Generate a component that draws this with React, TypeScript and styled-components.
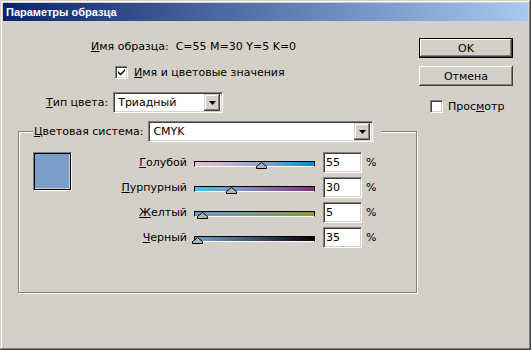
import React from "react";
import styled, { createGlobalStyle } from "styled-components";

const Global = createGlobalStyle`
  html, body { margin: 0; padding: 0; background: #d4d0c8; }
  body { font-family: "DejaVu Sans", Verdana, sans-serif; font-size: 11px; color: #000; }
  * { box-sizing: border-box; }
`;

const Window = styled.div`
  width: 531px;
  height: 350px;
  background: #d4d0c8;
  padding: 3px;
  display: flex;
  flex-direction: column;
  box-shadow: inset -1px -1px 0 #404040, inset 1px 1px 0 #d4d0c8,
    inset -2px -2px 0 #808080, inset 2px 2px 0 #ffffff;
`;

const TitleBar = styled.div`
  height: 18px;
  display: flex;
  align-items: center;
  padding-left: 3px;
  background: linear-gradient(to right, #0a246a, #a6caf0);
  color: #fff;
  font-family: "Liberation Sans", Arial, sans-serif;
  font-weight: bold;
  font-size: 11px;
`;

const Body = styled.div`
  display: flex;
`;

const Main = styled.div`
  display: flex;
  flex-direction: column;
  padding-left: 15px;
  width: 415px;
`;

const Side = styled.div`
  display: flex;
  flex-direction: column;
  padding-top: 17px;
`;

const Row = styled.div<{ $top: number; $left: number; $h?: number; $gap?: number }>`
  display: flex;
  align-items: center;
  margin-top: ${(p) => p.$top}px;
  padding-left: ${(p) => p.$left}px;
  height: ${(p) => p.$h ?? 16}px;
  gap: ${(p) => p.$gap ?? 6}px;
  white-space: nowrap;
`;

const Label = styled.span``;

const CheckBox = styled.span`
  width: 13px;
  height: 13px;
  background: #fff;
  border: 1px solid;
  border-color: #808080 #fff #fff #808080;
  box-shadow: inset 1px 1px 0 #404040, inset -1px -1px 0 #d4d0c8;
  display: inline-flex;
  align-items: center;
  justify-content: center;
  flex: none;
`;

const SelectBox = styled.div<{ $w: number }>`
  width: ${(p) => p.$w}px;
  height: 21px;
  background: #fff;
  border: 1px solid;
  border-color: #808080 #fff #fff #808080;
  box-shadow: inset 1px 1px 0 #404040, inset -1px -1px 0 #d4d0c8;
  display: flex;
  align-items: center;
  padding: 2px;
  flex: none;
`;

const SelectText = styled.span`
  flex: 1;
  padding-left: 2px;
`;

const DropButton = styled.span`
  width: 16px;
  height: 17px;
  background: #d4d0c8;
  box-shadow: inset -1px -1px 0 #404040, inset 1px 1px 0 #d4d0c8,
    inset -2px -2px 0 #808080, inset 2px 2px 0 #ffffff;
  display: flex;
  align-items: center;
  justify-content: center;
`;

const Group = styled.fieldset`
  margin: 8px 0 0 0;
  padding: 0;
  width: 399px;
  border: 1px solid #808080;
  box-shadow: inset 1px 1px 0 #fff, 1px 1px 0 #fff;
  min-width: 0;
`;

const Legend = styled.legend`
  margin-left: 14px;
  padding: 0 8px 0 1px;
  background: #d4d0c8;
  display: flex;
  align-items: center;
  gap: 5px;
  white-space: nowrap;
`;

const GroupContent = styled.div`
  display: flex;
  padding: 10px 0 44px 14px;
`;

const Swatch = styled.div`
  width: 39px;
  height: 39px;
  background: #7aa0ca;
  border: 1px solid;
  border-color: #808080 #fff #fff #808080;
  box-shadow: inset 1px 1px 0 #000, inset -1px -1px 0 #000, inset -2px -2px 0 #d4d0c8;
  flex: none;
`;

const SliderGrid = styled.div`
  display: grid;
  grid-template-columns: 114px 129px 39px auto;
  grid-auto-rows: 21px;
  row-gap: 4px;
  margin-left: 8px;
  align-items: center;
`;

const SliderLabel = styled.span`
  text-align: right;
  padding-right: 7px;
  white-space: nowrap;
`;

const Track = styled.div<{ $grad: string }>`
  position: relative;
  width: 121px;
  height: 6px;
  margin-top: 3px;
  background: ${(p) => p.$grad};
  border: 1px solid #000;
  border-bottom-color: #fff;
`;

const Thumb = styled.svg`
  position: absolute;
  top: 0;
  width: 11px;
  height: 7px;
  margin-left: -5px;
`;

const ValueInput = styled.div`
  width: 39px;
  height: 21px;
  background: #fff;
  border: 1px solid;
  border-color: #808080 #fff #fff #808080;
  box-shadow: inset 1px 1px 0 #404040, inset -1px -1px 0 #d4d0c8;
  display: flex;
  align-items: center;
  padding-left: 2px;
`;

const Percent = styled.span`
  padding-left: 4px;
`;

const Button = styled.div<{ $default?: boolean }>`
  width: 94px;
  height: 20px;
  margin-left: 1px;
  background: #d4d0c8;
  display: flex;
  align-items: center;
  justify-content: center;
  border: ${(p) => (p.$default ? "1px solid #000" : "none")};
  box-shadow: inset -1px -1px 0 #404040, inset 1px 1px 0 #fff,
    inset -2px -2px 0 #808080;
  & + & {
    margin-top: 8px;
  }
`;

const SideCheck = styled.div`
  display: flex;
  align-items: center;
  gap: 5px;
  margin-top: 14px;
  margin-left: 12px;
`;

const Check = () => (
  <svg width="9" height="9" viewBox="0 0 9 9">
    <path d="M1 3 L3.5 5.5 L8 1 L8 3 L3.5 7.5 L1 5 Z" fill="#000" />
  </svg>
);

const Arrow = () => (
  <svg width="7" height="4" viewBox="0 0 7 4">
    <path d="M0 0 H7 L3.5 4 Z" fill="#000" />
  </svg>
);

const sliders = [
  { key: "Г", rest: "олубой", value: "55", pos: 66, grad: "linear-gradient(to right, #f2bcd4, #8ea6d0 55%, #0090cc)" },
  { key: "П", rest: "урпурный", value: "30", pos: 36, grad: "linear-gradient(to right, #44c0ea, #7a90c4 40%, #8a2a7c)" },
  { key: "Ж", rest: "елтый", value: "5", pos: 7, grad: "linear-gradient(to right, #6c98cc, #8a9c3a)" },
  { key: "Ч", rest: "ерный", value: "35", pos: 2, grad: "linear-gradient(to right, #78a0cc, #000008)" },
];

export default function App() {
  return (
    <>
      <Global />
      <Window>
        <TitleBar>Параметры образца</TitleBar>
        <Body>
          <Main>
            <Row $top={17} $left={73}>
              <Label>
                <u>И</u>мя образца:&nbsp; C=55 M=30 Y=5 K=0
              </Label>
            </Row>
            <Row $top={10} $left={97}>
              <CheckBox>
                <Check />
              </CheckBox>
              <Label>
                <u>И</u>мя и цветовые значения
              </Label>
            </Row>
            <Row $top={12} $left={28} $h={21} $gap={5}>
              <Label>
                <u>Т</u>ип цвета:
              </Label>
              <SelectBox $w={110}>
                <SelectText>Триадный</SelectText>
                <DropButton>
                  <Arrow />
                </DropButton>
              </SelectBox>
            </Row>
            <Group>
              <Legend>
                <Label>
                  <u>Ц</u>ветовая система:
                </Label>
                <SelectBox $w={225}>
                  <SelectText>CMYK</SelectText>
                  <DropButton>
                    <Arrow />
                  </DropButton>
                </SelectBox>
              </Legend>
              <GroupContent>
                <Swatch />
                <SliderGrid>
                  {sliders.map((s) => (
                    <React.Fragment key={s.key}>
                      <SliderLabel>
                        <u>{s.key}</u>
                        {s.rest}
                      </SliderLabel>
                      <Track $grad={s.grad}>
                        <Thumb style={{ left: s.pos }} viewBox="0 0 11 7">
                          <path d="M0.5 6.5 V4.5 L5.5 0.5 L10.5 4.5 V6.5 Z" fill="#b4b4b4" stroke="#000" />
                        </Thumb>
                      </Track>
                      <ValueInput>{s.value}</ValueInput>
                      <Percent>%</Percent>
                    </React.Fragment>
                  ))}
                </SliderGrid>
              </GroupContent>
            </Group>
          </Main>
          <Side>
            <Button $default>OK</Button>
            <Button>Отмена</Button>
            <SideCheck>
              <CheckBox />
              <span>
                Прос<u>м</u>отр
              </span>
            </SideCheck>
          </Side>
        </Body>
      </Window>
    </>
  );
}
